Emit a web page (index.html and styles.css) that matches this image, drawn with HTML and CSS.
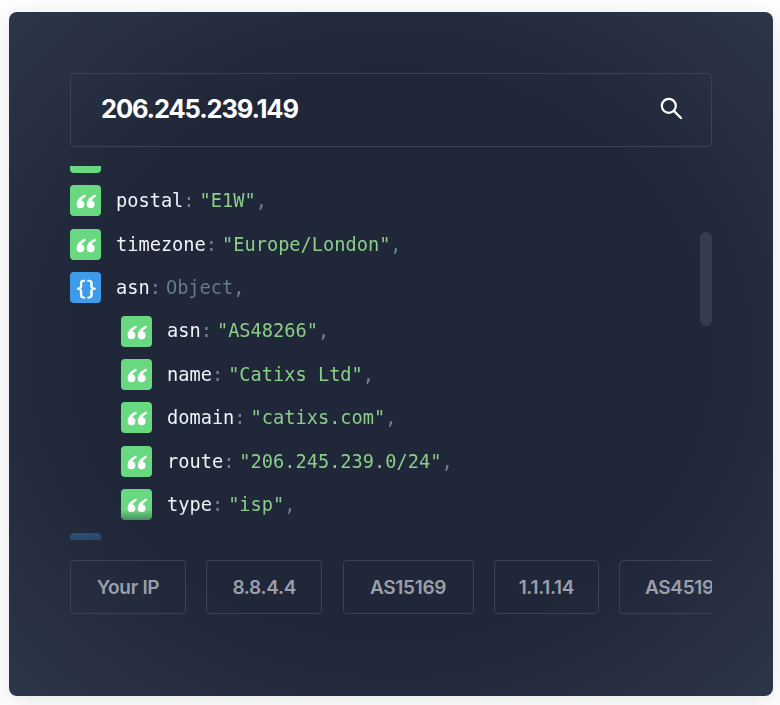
FILE: index.html
```html
<!DOCTYPE html>
<html lang="en">
<head>
<meta charset="utf-8">
<title>IP lookup</title>
<link rel="stylesheet" href="styles.css">
</head>
<body>
<svg class="defs" width="0" height="0" aria-hidden="true">
  <symbol id="quote" viewBox="0 0 31 31">
    <path d="M15.200 9.600C10.400 11.400 6.600 14.800 6.600 19.400a3.900 3.900 0 1 0 5-3.800C12 14 13.400 12.800 15.800 11.400z"/>
    <path d="M25.400 9.600C20.600 11.400 16.800 14.800 16.800 19.400a3.900 3.900 0 1 0 5-3.800C22.200 14 23.600 12.800 26 11.400z"/>
  </symbol>
</svg>
<main class="card">
  <div class="search">
    <span class="search-value">206.245.239.149</span>
    <svg class="search-icon" viewBox="0 0 24 24" width="24" height="24" aria-hidden="true">
      <circle cx="9.800" cy="9.800" r="7" fill="none" stroke="#fff" stroke-width="2.200"/>
      <path d="M14.800 14.800 22 22" fill="none" stroke="#fff" stroke-width="2.400" stroke-linecap="round"/>
    </svg>
  </div>
  <div class="viewer">
    <div class="scrollbar"></div>
    <div class="rows">
      <div class="row"><span class="badge badge-str"></span></div>
      <div class="row"><span class="badge badge-str"><svg class="glyph"><use href="#quote"/></svg></span><span class="key">postal</span><span class="colon">:</span><span class="str">"E1W"</span><span class="punct">,</span></div>
      <div class="row"><span class="badge badge-str"><svg class="glyph"><use href="#quote"/></svg></span><span class="key">timezone</span><span class="colon">:</span><span class="str">"Europe/London"</span><span class="punct">,</span></div>
      <div class="row"><span class="badge badge-obj">{}</span><span class="key">asn</span><span class="colon">:</span><span class="obj">Object</span><span class="punct">,</span></div>
      <div class="row nested"><span class="badge badge-str"><svg class="glyph"><use href="#quote"/></svg></span><span class="key">asn</span><span class="colon">:</span><span class="str">"AS48266"</span><span class="punct">,</span></div>
      <div class="row nested"><span class="badge badge-str"><svg class="glyph"><use href="#quote"/></svg></span><span class="key">name</span><span class="colon">:</span><span class="str">"Catixs Ltd"</span><span class="punct">,</span></div>
      <div class="row nested"><span class="badge badge-str"><svg class="glyph"><use href="#quote"/></svg></span><span class="key">domain</span><span class="colon">:</span><span class="str">"catixs.com"</span><span class="punct">,</span></div>
      <div class="row nested"><span class="badge badge-str"><svg class="glyph"><use href="#quote"/></svg></span><span class="key">route</span><span class="colon">:</span><span class="str">"206.245.239.0/24"</span><span class="punct">,</span></div>
      <div class="row nested"><span class="badge badge-str"><svg class="glyph"><use href="#quote"/></svg></span><span class="key">type</span><span class="colon">:</span><span class="str">"isp"</span><span class="punct">,</span></div>
      <div class="row"><span class="badge badge-obj"></span></div>
    </div>
  </div>
  <div class="chips">
    <button class="chip">Your IP</button>
    <button class="chip">8.8.4.4</button>
    <button class="chip">AS15169</button>
    <button class="chip">1.1.1.14</button>
    <button class="chip">AS45192</button>
  </div>
</main>
</body>
</html>
```
FILE: styles.css
```css
* { box-sizing: border-box; }
html, body { height: 100%; }
body {
  margin: 0;
  padding: 12px 7px 9px 9px;
  background: #fff;
  overflow: hidden;
}
.defs { position: absolute; }
.card {
  height: 684px;
  padding: 61px 61px 0 61px;
  border-radius: 8px;
  background: radial-gradient(ellipse 72% 72% at 50% 50%, #1f2739 58%, #2e3649 100%);
  box-shadow: 0 4px 24px rgba(30, 40, 60, 0.12);
}
.search {
  display: flex;
  align-items: center;
  justify-content: space-between;
  height: 74px;
  padding: 0 28px 4px 30px;
  border: 1px solid #3a4254;
  border-radius: 4px;
}
.search-value {
  font: 700 25.500px "Inter", "Liberation Sans", sans-serif;
  letter-spacing: -1.150px;
  color: #fff;
}
.search-icon { display: block; }
.viewer {
  position: relative;
  height: 374px;
  margin-top: 19px;
  overflow: hidden;
  -webkit-mask-image: linear-gradient(#000 calc(100% - 30px), rgba(0, 0, 0, 0.5) calc(100% - 18px), rgba(0, 0, 0, 0.25) 100%);
  mask-image: linear-gradient(#000 calc(100% - 30px), rgba(0, 0, 0, 0.5) calc(100% - 18px), rgba(0, 0, 0, 0.25) 100%);
}
.rows { margin-top: -29.600px; }
.row {
  display: flex;
  align-items: center;
  height: 43.400px;
  font: 18.650px/1 "DejaVu Sans Mono", monospace;
  white-space: pre;
}
.nested { padding-left: 51px; }
.badge {
  flex: none;
  display: flex;
  align-items: center;
  justify-content: center;
  width: 31px;
  height: 31px;
  margin: 0 15px 1px 0;
  border-radius: 4px;
  color: #fff;
}
.badge-str { background: #68d980; }
.badge-obj {
  background: #3d9be9;
  font: 400 20px/1 "DejaVu Sans Mono", monospace;
  -webkit-text-stroke: 0.4px #fff;
  letter-spacing: -1.500px;
}
.glyph { display: block; width: 31px; height: 31px; fill: #fff; }
.key { color: #f0f3f7; }
.colon { margin-right: 5px; color: #718096; }
.str { color: #8ace88; }
.obj { color: #66798f; }
.punct { color: #718096; }
.scrollbar {
  position: absolute;
  top: 66px;
  right: 0;
  width: 12px;
  height: 94px;
  border-radius: 6px;
  background: #343d4e;
}
.chips {
  display: grid;
  grid-template-columns: 116px 116px 131px 105px 132px;
  gap: 20.300px;
  margin-top: 20px;
  overflow: hidden;
}
.chip {
  height: 54px;
  padding: 0;
  border: 1px solid #3a4254;
  border-radius: 4px;
  background: transparent;
  color: #9a9fa9;
  font: 600 19px "Inter", "Liberation Sans", sans-serif;
  letter-spacing: -0.3px;
  white-space: nowrap;
}
```
